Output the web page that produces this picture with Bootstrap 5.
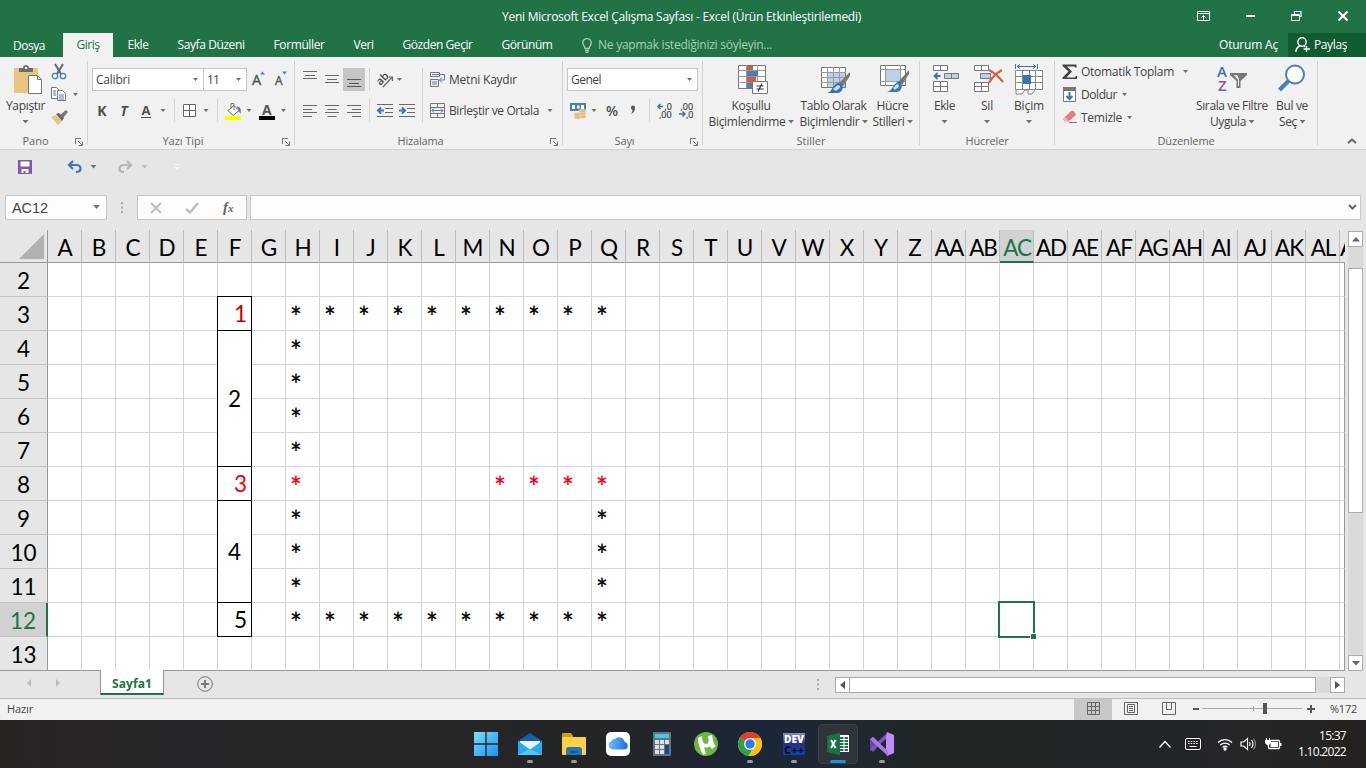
<!DOCTYPE html>
<html lang="tr">
<head>
<meta charset="utf-8">
<meta name="viewport" content="width=device-width, initial-scale=1">
<title>Yeni Microsoft Excel Çalışma Sayfası - Excel</title>
<link rel="stylesheet" href="https://cdn.jsdelivr.net/npm/bootstrap@5.3.0/dist/css/bootstrap.min.css">
<style>
  html,body{height:100%;overflow:hidden}
  body{font-family:"Open Sans","Noto Sans",sans-serif;font-size:12px;line-height:16px;color:#444;background:#e6e6e6;width:1366px;height:768px}
  svg{display:block;flex:none;overflow:visible}
  [data-w]{display:inline-block;white-space:nowrap}
  .xl-title{height:33px;background:#217346;color:#fff;grid-template-columns:1fr auto 1fr;padding-top:1px}
  .xl-title>[data-w]{margin-left:-3px}
  .xl-tabs{height:24px;background:#217346;color:#fff}
  .xl-tabs .nav-link{color:#fff;padding:4px 14.5px 0;height:24px;border-radius:0;line-height:16px}
  .xl-tabs .file-tab{padding:5px 18px 0 13px}
  .xl-tabs .nav-link.active{background:#f1f1f1;color:#217346;padding:4px 13.5px 0}
  .tell-me{color:#a5cfb4;gap:6px;padding-left:15px}
  .share-btn{background:#0e5c2f;width:78px;height:24px;padding-left:7px}
  .sign-in{margin-right:10px}
  .win-btns{width:169px;height:32px;padding:0 18px 3px 0;justify-content:space-between}
  .ribbon{height:93px;background:#f1f1f1;border-bottom:1px solid #d2d2d2}
  .rgroup{position:relative;height:92px;border-right:1px solid transparent;display:flex;flex-direction:column;flex:none}
  .rgroup::after{content:"";position:absolute;right:-1px;top:4px;bottom:4px;width:1px;background:#d2d2d2}
  .rbody{height:77px;display:flex}
  .rlabel{height:14px;line-height:14px;display:flex;justify-content:center;align-items:center;position:relative;color:#666;font-size:11px}
  .rlabel svg{position:absolute;right:4px;top:4px}
  .g-clip{width:88px}.g-font{width:207px}.g-align{width:268px}.g-num{width:140px}.g-style{width:217px}.g-cells{width:135px}.g-edit{width:263px}
  .dd{width:7px;height:4px;margin:0 -1px;background:#707070;clip-path:polygon(8% 0,92% 0,50% 90%);display:inline-block;flex:none}
  .dd.dim{background:#bbb}
  .vsep{width:1px;height:23px;background:#d5d5d5}
  .vsep.long{height:55px;margin-bottom:-32px}
  .trow{display:grid;height:23px;align-items:center;justify-items:center}
  .trow>span[data-w]{justify-self:start}
  .tstack{padding:11px 0 0 4px;display:grid;gap:8px;align-content:start}
  .tr-font1{grid-template-columns:112px 43px 23px 22px;justify-items:start}
  .tr-font2{grid-template-columns:20px 24px 20px 14px 8px 22px 12px 10px 22px 10px 26px 7px}
  .tr-al1{grid-template-columns:22px 22px 22px 9px 22px 7px 15px 9px 22px 90px}
  .tr-al2{grid-template-columns:22px 22px 22px 9px 22px 22px 9px 22px 90px 22px}
  .tr-num2{grid-template-columns:22px 10px 26px 16px 16px 14px 30px}
  .pick{background:#fff;border:1px solid #c6c6c6;height:23px;display:flex;align-items:center;justify-content:space-between;padding:0 5px 0 3px;color:#444}
  .pick.p1{width:112px}.pick.p2{margin-left:-1px;width:44px}.pick.p3{width:131px}
  .on{background:#c5c5c5;width:22px;height:23px;display:grid;place-items:center;padding-top:6px}
  .big{display:flex;flex-direction:column;align-items:center;padding-top:7px;white-space:nowrap}
  .big .ic{height:34px;display:grid;align-content:start;justify-items:center}
  .big div.t{height:16px;line-height:16px;display:flex;align-items:center;gap:3px}
  .fmt{font-weight:700;font-size:14px;line-height:18px;color:#505050}
  .fmt.uline{line-height:14px;border-bottom:1px solid #505050;padding:0 1px;font-size:13px}
  .w-paste{width:51px}.w-clipside{width:36px}
  .small-stack{display:grid;grid-template-rows:23px 23px 23px;padding-top:3px;align-items:center}
  .small-stack>div{display:flex;align-items:center}
  .w-s1{width:96px}.w-s2{width:69px}.w-s3{width:49px}
  .w-c1{width:49px}.w-c2{width:36px}.w-c3{width:48px}
  .w-e1{width:135px;padding-left:7px}.w-e2{width:84px}.w-e3{width:36px}
  .qat{height:45px;padding:0 0 11px 18px}
  .undo-gap{margin-left:34px}.redo-gap{margin-left:22px}.more-gap{margin-left:27px}
  .qat .dd{margin-left:7px}
  .fbar{height:35px;align-items:flex-start}
  .fbar>.fbox{height:25px;border:1px solid #c6c6c6;background:#fdfdfd;display:flex;align-items:center}
  .name-box{width:102px;margin-left:5px;padding:0 6px 0 6px;justify-content:space-between;font:14.500px/20px "Liberation Sans",sans-serif;color:#444}
  .fx-box{width:110px;justify-content:space-between;padding:0 11px 0 12px}
  .formula{width:1111px;margin-left:3px;justify-content:flex-end;padding-right:3px}
  .dots{width:30px;height:25px;display:grid;place-items:center}
  .work{height:441px}
  .sheet{position:relative;width:1345px;height:441px;display:grid;grid-template-columns:48px repeat(38,34px) 5px;grid-template-rows:33px repeat(12,34px);overflow:hidden;flex:none;font-family:Lato,sans-serif;color:#000}
  .hc{border-right:1px solid #bdbdbd;border-bottom:1px solid #999;font-size:22.500px;line-height:35px;padding-left:1px;text-align:center;white-space:nowrap;background:#e6e6e6;height:33px}
  .hc.two span{letter-spacing:-1.100px;margin:0 -6px}
  .hc.cut{border-right:0;overflow:hidden;padding:0}
  .hc.sel{background:#d2d2d2;color:#217346;border-bottom:2px solid #217346}
  .rh{border-right:1px solid #999;border-bottom:1px solid #c4c4c4;font-size:22.500px;line-height:35px;text-align:center;background:#e6e6e6}
  .rh.sel{background:#d2d2d2;color:#217346;border-right:2px solid #217346}
  .cellx{border-right:1px solid #d4d4d4;border-bottom:1px solid #d4d4d4;background:#fff;line-height:33px}
  .cellx.endc{border-right:1px solid #999}
  .cellx.endr,.rh.endr{border-bottom:1px solid #999}
  .star{font-size:28px;font-weight:600;padding-left:4px;line-height:38px;height:34px;overflow:hidden}
  .num{z-index:1;margin:-1px 0 0 -1px;border:1px solid #000;background:#fff;text-align:right;font-size:22.500px;line-height:32px;padding:1px 4px 0 0;display:grid;align-items:center}
  .num.mid{text-align:center;padding:1px 0 0}
  .red1{color:#c00000}.red2{color:#f00010}
  .corner{border-right:1px solid #999;border-bottom:1px solid #999;display:flex;align-items:flex-end;justify-content:flex-end;padding:0 3px 3px 0}
  .pointer-cell{position:absolute;left:998px;top:371px;width:37px;height:37px;border:2px solid #217346;z-index:2}
  .pointer-cell::after{content:"";position:absolute;right:-4px;bottom:-4px;width:7px;height:7px;background:#217346;border:1px solid #fff}
  .vscroll{width:15px;margin:2px 0 0 3px;height:439px;background:#dadada}
  .sbtn{width:15px;height:16px;border:1px solid #ababab;background:#fff;display:grid;place-items:center;flex:none}
  .vscroll .sbtn:first-child{margin-top:-1px}
  .v-thumb{height:245px;margin-top:21px;border:1px solid #ababab;background:#fff}
  .tabs-row{height:28px;border-bottom:1px solid #bdbdbd}
  .tab-arrows{width:100px;padding:0 39px 3px 26px}
  .sheet-tab{width:64px;height:25px;margin-top:-1px;background:#fff;border:1px solid #999;border-top:0;border-bottom:2px solid #217346;color:#217346;font-weight:700;text-align:center;line-height:27px;z-index:3}
  .add-tab{margin:5px 0 0 33px}
  .grip{margin:8px 0 0 auto}
  .hscroll{width:510px;height:16px;margin:6px 21px 0 16px;background:#dadada}
  .h-thumb{width:467px;margin-left:-1px;border:1px solid #ababab;background:#fff;height:16px}
  .status{height:21px;background:#f1f1f1;font-size:11px;padding:0 0 1px 7px}
  .vw{width:38px;height:21px;margin-bottom:-1px;display:grid;place-items:center;padding-bottom:3px}
  .vw.act{background:#c8c8c8}
  .zoom-val{margin:0 9px 0 14px}
  .taskbar{height:48px;background:linear-gradient(90deg,#2a2322 0,#27262a 190px,#262627 400px,#242527 600px,#1b2638 770px,#1e2831 840px,#202722 950px,#21262a 1130px,#252628 1260px,#24211f 1366px);color:#fff}
  .apps{margin-left:466px}
  .app{width:40px;height:40px;border-radius:4px;position:relative;margin-right:4px;display:grid;place-items:center;margin-top:4px}
  .app.cur{background:#2f3438;border:1px solid #3a3f43}
  .app.run::after{content:"";position:absolute;left:17px;bottom:1px;width:6px;height:3px;border-radius:2px;background:#9b9c9c}
  .app.cur::after{content:"";position:absolute;left:11px;bottom:0;width:16px;height:3px;border-radius:2px;background:#1f90e6}
  .tray svg:nth-child(2){margin-left:13px}.tray svg:nth-child(3){margin-left:16px}.tray svg:nth-child(4){margin-left:7px}.tray svg:nth-child(5){margin-left:9px}
  .clock{width:60px;margin:0 20px 0 4px;text-align:right;line-height:16px}
</style>
</head>
<body class="d-flex flex-column">

<header>
  <div class="xl-title d-grid align-items-center">
    <span></span><span data-w="359">Yeni Microsoft Excel Çalışma Sayfası - Excel (Ürün Etkinleştirilemedi)</span>
    <div class="win-btns d-flex ms-auto align-items-center">
      <svg width="13" height="10" fill="none" stroke="#fff"><path d="M.5.5h12v9H.5zM.5 2.500h12M6.500 9V4.500M4.500 6.500l2-2 2 2"/></svg>
      <svg width="9" height="3"><path d="M0 1h9v2H0z" fill="#fff"/></svg>
      <svg width="11" height="10" fill="none" stroke="#fff"><path d="M3.500 3V.5h6.500v5h-2" stroke-width="1.200"/><path d="M.5 3.500h8v6H.5zM.5 4.500h8"/></svg>
      <svg width="10" height="10" stroke="#fff" stroke-width="2.200"><path d="M.5.5l9 9M9.500.5l-9 9"/></svg>
    </div>
  </div>
  <nav class="xl-tabs nav flex-nowrap">
    <a class="nav-link file-tab"><span data-w="32">Dosya</span></a>
    <a class="nav-link active"><span data-w="23">Giriş</span></a>
    <a class="nav-link"><span data-w="21">Ekle</span></a>
    <a class="nav-link"><span data-w="67">Sayfa Düzeni</span></a>
    <a class="nav-link"><span data-w="51">Formüller</span></a>
    <a class="nav-link"><span data-w="20">Veri</span></a>
    <a class="nav-link"><span data-w="70">Gözden Geçir</span></a>
    <a class="nav-link"><span data-w="51">Görünüm</span></a>
    <div class="tell-me d-flex align-items-center">
      <svg width="10" height="15" fill="none" stroke="#a5cfb4" stroke-width="1.300"><path d="M3 10.500C3 8 .8 7.500.8 4.800a4.200 4.200 0 0 1 8.400 0C9.200 7.500 7 8 7 10.500zM3 12.500h4M3.500 14.300h3"/></svg>
      <span data-w="174">Ne yapmak istediğinizi söyleyin...</span>
    </div>
    <div class="ms-auto d-flex align-items-center"><span class="sign-in" data-w="59">Oturum Aç</span></div>
    <div class="share-btn d-flex align-items-center gap-1">
      <svg width="15" height="16" fill="none" stroke="#fff" stroke-width="1.400"><circle cx="7" cy="5" r="4.200"/><path d="M5.500 8.500C3 9.500 1 12 .8 15M9 9l1 1M11.500 9v6M8.500 12h6.500"/></svg>
      <span data-w="33">Paylaş</span>
    </div>
  </nav>
</header>

<section class="ribbon d-flex">
  <div class="rgroup g-clip">
    <div class="rbody">
      <div class="big w-paste">
        <div class="ic ps-1"><svg width="28" height="31"><path d="M0 4h24v25H0z" fill="#e9c583"/><path d="M5 8V4h4c0-4 6-4 6 0h4v4z" fill="#6d6d6d"/><path d="M11 3h2v2h-2z" fill="#f1f1f1"/><path d="M14.500 11.500h9l4 4v14h-13z" fill="#fff" stroke="#777"/><path d="M23.500 11.500v4h4" fill="none" stroke="#777"/></svg></div>
        <div class="t"><span data-w="39">Yapıştır</span></div><div class="t"><i class="dd"></i></div>
      </div>
      <div class="small-stack w-clipside">
        <div><svg width="16" height="17" fill="none"><path d="M4 1l6 10M12 1L6 11" stroke="#666" stroke-width="2"/><circle cx="4" cy="13" r="2.700" stroke="#4a7eba" stroke-width="1.300"/><circle cx="12" cy="13" r="2.700" stroke="#4a7eba" stroke-width="1.300"/></svg></div>
        <div class="gap-2"><svg width="14" height="15" fill="#fff" stroke="#777"><path d="M.5.5h5l2 2v9h-7z"/><path d="M6.500 3.500h5l3 3v7h-8z"/><path d="M2 4h3M2 6h3M2 8h3M8 8h5M8 10h5M8 12h5" stroke="#4a7eba"/></svg><i class="dd"></i></div>
        <div><svg width="17" height="15"><path d="M0 7l5-2 6 6-4 4z" fill="#e9c583"/><path d="M5 4l3-1 5 5-2 3z" fill="#666"/><path d="M9 5l6-5 2 2-5 6z" fill="#777"/></svg></div>
      </div>
    </div>
    <div class="rlabel pe-3"><span data-w="26">Pano</span><svg width="8" height="8" fill="none" stroke="#777"><path d="M.5 6V.5H6M3 3l4 4M7.500 3.500v4h-4"/></svg></div>
  </div>

  <div class="rgroup g-font">
    <div class="rbody tstack">
      <div class="trow tr-font1">
        <div class="pick p1"><span data-w="34">Calibri</span><i class="dd"></i></div>
        <div class="pick p2"><span data-w="12">11</span><i class="dd"></i></div>
        <svg class="ms-1" width="16" height="19"><text x="1" y="15" font-size="14.500" fill="#555" stroke="#555" stroke-width=".4">A</text><path d="M9 4.500l2.500-3 2.500 3z" fill="#4a7eba"/></svg>
        <svg class="ms-1" width="16" height="19"><text x="1" y="15" font-size="12" fill="#555" stroke="#555" stroke-width=".4">A</text><path d="M8 1.500h5l-2.500 3z" fill="#4a7eba"/></svg>
      </div>
      <div class="trow tr-font2">
        <b class="fmt">K</b><b class="fmt fst-italic">T</b><b class="fmt uline">A</b><i class="dd"></i><i class="vsep"></i>
        <svg width="13" height="13" fill="#fff" stroke="#666"><path d="M.5.5h12v12H.5zM6.500 0v13M0 6.500h13"/></svg><i class="dd"></i><i class="vsep"></i>
        <svg width="17" height="18"><path d="M3 8.500l6-5 5 5-6 5z" fill="#fff" stroke="#666"/><path d="M6 7V1.500h3V8" fill="none" stroke="#777"/><path d="M11.500 4.500c4 0 5 3 4 7.500-1-2-2-3-2-4z" fill="#4a7eba"/><path d="M0 14h16v4H0z" fill="#ff0"/></svg><i class="dd"></i>
        <svg width="16" height="18"><text x="3" y="12.500" font-size="14" font-weight="700" fill="#555">A</text><path d="M0 14h16v4H0z"/></svg><i class="dd"></i>
      </div>
    </div>
    <div class="rlabel pe-3"><span data-w="41">Yazı Tipi</span><svg width="8" height="8" fill="none" stroke="#777"><path d="M.5 6V.5H6M3 3l4 4M7.500 3.500v4h-4"/></svg></div>
  </div>

  <div class="rgroup g-align">
    <div class="rbody tstack">
      <div class="trow tr-al1">
        <svg width="14" height="20" stroke="#6a6a6a"><path d="M0 1.500h14M2 5.500h10M0 8.500h14"/></svg>
        <svg width="14" height="20" stroke="#6a6a6a"><path d="M0 5.500h14M2 9.500h10M0 12.500h14"/></svg>
        <div class="on"><svg width="14" height="10" stroke="#555"><path d="M0 1.500h14M2 5.500h10M0 8.500h14"/></svg></div>
        <i class="vsep"></i>
        <svg width="17" height="16"><text x="2" y="13" font-size="11" font-weight="600" fill="#444" transform="rotate(-45 4 12)">ab</text><path d="M6 15L15 5.500M11.500 5h4v4" fill="none" stroke="#666" stroke-width="1.200"/></svg>
        <i class="dd"></i><span></span><i class="vsep long align-self-start"></i>
        <svg width="16" height="16" fill="none" stroke="#777"><path d="M.5.5h9v4h-9zM.5 7.500h8v7h-8zM2 10h5M2 12h5"/><path d="M2 2.500h12.500V8H9.500M12 5.500L9.500 8l2.500 2.500" stroke="#4a7eba"/></svg>
        <span data-w="68">Metni Kaydır</span>
      </div>
      <div class="trow tr-al2">
        <svg width="14" height="12" stroke="#6a6a6a"><path d="M0 .5h14M0 4.500h9M0 7.500h14M0 11.500h9"/></svg>
        <svg width="14" height="12" stroke="#6a6a6a"><path d="M0 .5h14M2.500 4.500h9M0 7.500h14M2.500 11.500h9"/></svg>
        <svg width="14" height="12" stroke="#6a6a6a"><path d="M0 .5h14M5 4.500h9M0 7.500h14M5 11.500h9"/></svg>
        <i class="vsep"></i>
        <svg width="16" height="13" stroke="#6a6a6a"><path d="M0 .5h16M8 4.500h8M8 8.500h8M0 12.500h16"/><path d="M1 6.500h6M4 3.500l-3 3 3 3" fill="none" stroke="#3b74b4" stroke-width="2"/></svg>
        <svg width="16" height="13" stroke="#6a6a6a"><path d="M0 .5h16M8 4.500h8M8 8.500h8M0 12.500h16"/><path d="M0 6.500h6M3 3.500l3 3-3 3" fill="none" stroke="#3b74b4" stroke-width="2"/></svg>
        <span></span>
        <svg width="16" height="15" fill="none" stroke="#777"><path d="M.5.5h14v14H.5zM.5 4.500h14M.5 10.500h14M7.500 0v4M7.500 11v4"/><path d="M2 7.500h11M4 5.500l-2 2 2 2M11 5.500l2 2-2 2" stroke="#4a7eba"/></svg>
        <span data-w="90">Birleştir ve Ortala</span><i class="dd"></i>
      </div>
    </div>
    <div class="rlabel pe-3"><span data-w="46">Hizalama</span><svg width="8" height="8" fill="none" stroke="#777"><path d="M.5 6V.5H6M3 3l4 4M7.500 3.500v4h-4"/></svg></div>
  </div>

  <div class="rgroup g-num">
    <div class="rbody tstack">
      <div class="d-flex"><div class="pick p3"><span data-w="30">Genel</span><i class="dd"></i></div></div>
      <div class="trow tr-num2">
        <svg width="17" height="16"><path d="M0 0h16v8H0z" fill="#4a7eba"/><path d="M2 2h3v4H2zM11 2h3v4h-3zM7 2.500h2.500v3H7z" fill="#fff"/><g fill="#e3bb76" stroke="#f1f1f1" stroke-width=".4"><ellipse cx="12.500" cy="13.500" rx="3.500" ry="1.900"/><ellipse cx="12.500" cy="10.500" rx="3.500" ry="1.900"/><ellipse cx="12.500" cy="7.800" rx="3.500" ry="1.900"/><ellipse cx="7.500" cy="14.300" rx="3.500" ry="1.900"/><ellipse cx="7.500" cy="11.500" rx="3.500" ry="1.900"/></g></svg>
        <i class="dd"></i><b class="fmt fw-semibold">%</b>
        <svg width="6" height="9"><path d="M1 1.500a2 2 0 0 1 4 0C5 5 3.500 7 1 8c1-1.500 1.500-2.500 1.500-4C1.500 4 1 3 1 1.500z" fill="#555"/></svg>
        <i class="vsep"></i>
        <svg width="15" height="17" font-size="9" fill="#444" stroke="#444" stroke-width=".2"><text x="7.500" y="7.500">,0</text><text x="2" y="15.500">,00</text><path d="M1 4.500h5M3.500 2L1 4.500 3.500 7" fill="none" stroke="#3b74b4" stroke-width="1.500"/></svg>
        <svg width="15" height="17" font-size="9" fill="#444" stroke="#444" stroke-width=".2"><text x="1.500" y="7.500">,00</text><text x="7" y="15.500">,0</text><path d="M0 12h6M3.500 9.500L6 12l-2.500 2.500" fill="none" stroke="#3b74b4" stroke-width="1.500"/></svg>
      </div>
    </div>
    <div class="rlabel pe-3"><span data-w="20">Sayı</span><svg width="8" height="8" fill="none" stroke="#777"><path d="M.5 6V.5H6M3 3l4 4M7.500 3.500v4h-4"/></svg></div>
  </div>

  <div class="rgroup g-style">
    <div class="rbody">
      <div class="big w-s1">
        <div class="ic ps-1"><svg width="31" height="31"><path d="M.5 1.500h27v23H.5z" fill="#fff" stroke="#777"/><path d="M8.500 1v23M19.500 1v23M0 6.500h27M0 12.500h27M0 18.500h27" stroke="#999"/><path d="M9 2h6v4H9zM9 13h9v5H9z" fill="#d35a3c"/><path d="M9 7h11v5H9zM9 19h5v5H9z" fill="#4a7eba"/><path d="M14.500 17.500h15v12h-15z" fill="#fff" stroke="#777"/><path d="M18.500 22h7M18.500 25h7M24 19.500l-4 8" stroke="#333" stroke-width="1.200"/></svg></div>
        <div class="t"><span data-w="39">Koşullu</span></div><div class="t"><span data-w="77">Biçimlendirme</span><i class="dd"></i></div>
      </div>
      <div class="big w-s2">
        <div class="ic ps-1"><svg width="30" height="31"><path d="M.5 3.500h24v20H.5z" fill="#fff" stroke="#777"/><path d="M7 9h17v14H7z" fill="#bdd0e6"/><path d="M6.500 3v20M12.500 3v20M18.500 3v20M0 8.500h25M0 13.500h25M0 18.500h25" stroke="#999"/><path d="M29 8v4l-7 10-4-3z" fill="#777"/><path d="M20 19c3 3 2 9-3 10H6c4-1 4-3 6-6 2-4 6-5 8-4z" fill="#3b74b4"/><path d="M12 25c2-1 3-3 5-4l2 1c0 3-2 3-4 5z" fill="#cfe0f2"/></svg></div>
        <div class="t"><span data-w="66">Tablo Olarak</span></div><div class="t"><span data-w="60">Biçimlendir</span><i class="dd"></i></div>
      </div>
      <div class="big w-s3">
        <div class="ic ps-1"><svg width="30" height="31"><path d="M.5 1.500h25v20H.5z" fill="#fff" stroke="#777"/><path d="M5.500 1v21M20.500 1v21M0 5.500h26M0 17.500h26" stroke="#999"/><path d="M6 6h14v11H6z" fill="#bdd0e6"/><path d="M29 6v4l-7 11-4-3z" fill="#777"/><path d="M20 18c3 3 2 9-3 10H7c4-1 4-3 6-5 2-4 5-6 7-5z" fill="#3b74b4"/><path d="M13 24c2-1 2-3 4-4l2 1c0 3-2 3-4 5z" fill="#cfe0f2"/></svg></div>
        <div class="t"><span data-w="32">Hücre</span></div><div class="t"><span data-w="32">Stilleri</span><i class="dd"></i></div>
      </div>
    </div>
    <div class="rlabel"><span data-w="29">Stiller</span></div>
  </div>

  <div class="rgroup g-cells">
    <div class="rbody">
      <div class="big w-c1">
        <div class="ic ps-1"><svg width="27" height="30" fill="#fff" stroke="#777"><path d="M.5 1.500h14v5H.5zM7.500 1.500v5M.5 17.500h14v10H.5zM7.500 17v10M.5 22.500h14"/><path d="M11.500 9.500h14v5h-14z" fill="#bdd0e6"/><path d="M18.500 9.500v5"/><path d="M1.500 12h6M4.500 9l-3 3 3 3" fill="none" stroke="#3b74b4" stroke-width="1.800"/></svg></div>
        <div class="t"><span data-w="21">Ekle</span></div><div class="t"><i class="dd"></i></div>
      </div>
      <div class="big w-c2">
        <div class="ic ps-1"><svg width="30" height="30" fill="#fff" stroke="#777"><path d="M.5 1.500h14v5H.5zM7.500 1.500v5M.5 18.500h14v9H.5zM7.500 18v10M.5 22.500h14"/><path d="M6.500 9.500h10v5h-10z" fill="#bdd0e6"/><path d="M15 6c4 2 10 7 14 12M28 6c-5 3-10 7-13 13" fill="none" stroke="#d8603f" stroke-width="2.200"/></svg></div>
        <div class="t"><span data-w="12">Sil</span></div><div class="t"><i class="dd"></i></div>
      </div>
      <div class="big w-c3">
        <div class="ic"><svg width="29" height="31" fill="none" stroke="#888"><path d="M.5 6.500h27v19H.5z" fill="#fff"/><path d="M7.500 6v20M20.500 6v20M0 12.500h28M0 18.500h28M14.500 6v20"/><path d="M8 11h8v9H8z" fill="#3b74b4" stroke="none"/><path d="M1 26v4h6l3-4h3v4h4l3-4"/><path d="M.5 0v5M22.500 0v5M2 2.500h19M5 .5l-3 2 3 2M18 .5l3 2-3 2" stroke="#3b74b4"/></svg></div>
        <div class="t"><span data-w="30">Biçim</span></div><div class="t"><i class="dd"></i></div>
      </div>
    </div>
    <div class="rlabel"><span data-w="43">Hücreler</span></div>
  </div>

  <div class="rgroup g-edit">
    <div class="rbody">
      <div class="small-stack w-e1">
        <div><svg width="19" height="16"><path d="M.5.500h14v3h-1.500l-.5-1H5l5 5-5.500 6H13l.8-1.500h1.200V15H.5v-1.500l6-6-6-5.500z" fill="#444"/></svg><span data-w="93">Otomatik Toplam</span><i class="dd ms-2"></i></div>
        <div><svg width="19" height="16"><path d="M1.500 1.500h12v13h-12z" fill="#fff" stroke="#777"/><path d="M1 0h13v4H1z" fill="#777"/><path d="M7.500 5v7M4.500 9l3 3 3-3" fill="none" stroke="#3b74b4" stroke-width="2"/></svg><span data-w="36">Doldur</span><i class="dd ms-1"></i></div>
        <div><svg width="19" height="15"><path d="M1 9L9 1h3l2 4-8 7H3z" fill="#e8788c"/><path d="M1 9l2-2 4 4-1 1H3z" fill="#f3b7c0"/><path d="M7 12.500h8" stroke="#777"/></svg><span data-w="41">Temizle</span><i class="dd ms-1"></i></div>
      </div>
      <div class="big w-e2">
        <div class="ic"><svg width="30" height="30"><text x="0" y="13" font-size="15" font-weight="600" fill="#3b74b4">A</text><text x="1" y="27" font-size="15" font-weight="600" fill="#8b56ad">Z</text><path d="M13 9h17v2l-6.500 6v7h-4v-7L13 11z" fill="#777"/><path d="M17 11l4 5v6h1V15l-2-4z" fill="#eee"/></svg></div>
        <div class="t"><span data-w="72">Sırala ve Filtre</span></div><div class="t"><span data-w="36">Uygula</span><i class="dd"></i></div>
      </div>
      <div class="big w-e3">
        <div class="ic"><svg width="28" height="30"><circle cx="17" cy="10.500" r="9" fill="#fff" stroke="#4a7eba" stroke-width="2"/><path d="M10.500 17L1.500 26" stroke="#4a7eba" stroke-width="4"/></svg></div>
        <div class="t"><span data-w="32">Bul ve</span></div><div class="t"><span data-w="18">Seç</span><i class="dd"></i></div>
      </div>
    </div>
    <div class="rlabel"><span data-w="57">Düzenleme</span></div>
  </div>
  <svg class="mt-auto mb-1 ms-auto me-2" width="11" height="8" fill="none" stroke="#666" stroke-width="2"><path d="M1 6l4-3.500L9 6"/></svg>
</section>

<div class="qat d-flex align-items-center">
  <svg width="15" height="15"><path d="M0 0h14v14H0z" fill="#8458a6"/><path d="M2.500 1.500h9v5h-9zM3.500 9h7v4h-3v-2h-2v2h-2z" fill="#fff"/></svg>
  <svg class="undo-gap" width="16" height="14" fill="none" stroke="#3f76b5" stroke-width="2.200"><path d="M2 5h7c6 0 6 7 0 7M6 1L2 5l4 4"/></svg><i class="dd"></i>
  <svg class="redo-gap" width="16" height="14" fill="none" stroke="#b5b5b5" stroke-width="2.200"><path d="M13 5H6c-6 0-6 7 0 7M9 1l4 4-4 4"/></svg><i class="dd dim"></i>
  <svg class="more-gap" width="7" height="7"><path d="M0 .5h6" stroke="#f4f4f4"/><path d="M0 3h6L3 6z" fill="#f4f4f4"/></svg>
</div>
<div class="fbar d-flex">
  <div class="fbox name-box"><span data-w="36">AC12</span><svg width="7" height="5"><path d="M0 0h7L3.500 4z" fill="#777"/></svg></div>
  <div class="dots"><svg width="2" height="11" fill="#aaa"><path d="M0 0h2v2H0zM0 4.500h2v2H0zM0 9h2v2H0z"/></svg></div>
  <div class="fbox fx-box">
    <svg width="12" height="12" stroke="#bdbdbd" stroke-width="2"><path d="M1 1l10 10M11 1L1 11"/></svg>
    <svg width="14" height="12" fill="none" stroke="#bdbdbd" stroke-width="2.400"><path d="M1 7l4 3.500L13 1"/></svg>
    <svg width="14" height="16"><text x="2" y="12" font-family="Liberation Serif" font-style="italic" font-weight="700" font-size="15" fill="#666">f</text><text x="7" y="12" font-family="Liberation Serif" font-style="italic" font-weight="700" font-size="11" fill="#666">x</text></svg>
  </div>
  <div class="fbox formula"><svg width="9" height="7" fill="none" stroke="#666" stroke-width="2"><path d="M1 1l3.500 3.500L8 1"/></svg></div>
</div>

<main class="work d-flex">
  <div class="sheet" id="sheet"></div>
  <div class="vscroll d-flex flex-column">
    <div class="sbtn"><svg width="8" height="5"><path d="M0 4.500h8L4 0z" fill="#666"/></svg></div>
    <div class="v-thumb"></div>
    <div class="sbtn mt-auto"><svg width="8" height="5"><path d="M0 0h8L4 4.500z" fill="#666"/></svg></div>
  </div>
</main>

<div class="tabs-row d-flex">
  <div class="tab-arrows d-flex align-items-center justify-content-between">
    <svg width="5" height="8"><path d="M5 0v8L1 4z" fill="#bbb"/></svg><svg width="5" height="8"><path d="M0 0v8l4-4z" fill="#bbb"/></svg>
  </div>
  <div class="sheet-tab"><span data-w="40">Sayfa1</span></div>
  <svg class="add-tab" width="17" height="17" fill="none" stroke="#777"><circle cx="8" cy="8" r="7.300"/><path d="M8 4v8M4 8h8" stroke-width="2"/></svg>
  <svg class="grip" width="2" height="11" fill="#aaa"><path d="M0 0h2v2H0zM0 4.500h2v2H0zM0 9h2v2H0z"/></svg>
  <div class="hscroll d-flex">
    <div class="sbtn"><svg width="5" height="8"><path d="M5 0v8L0 4z" fill="#555"/></svg></div>
    <div class="h-thumb"></div>
    <div class="sbtn ms-auto"><svg width="5" height="8"><path d="M0 0v8l5-4z" fill="#555"/></svg></div>
  </div>
</div>

<footer class="status d-flex align-items-center">
  <span data-w="26">Hazır</span>
  <div class="ms-auto d-flex align-items-center">
    <div class="vw act"><svg width="13" height="13" fill="none" stroke="#666"><path d="M.5.500h12v12H.5zM4.500 0v13M8.500 0v13M0 4.500h13M0 8.500h13"/></svg></div>
    <div class="vw"><svg width="14" height="13" fill="none" stroke="#666"><path d="M.5.500h13v12H.5zM3.500 2.500h7v8h-7zM5 4.500h4M5 6.500h4M5 8.500h4"/></svg></div>
    <div class="vw"><svg width="14" height="13" fill="none" stroke="#666"><path d="M.5.500h13v12H.5zM4.500 0v7.500H9.500V0"/></svg></div>
    <svg class="ms-1" width="124" height="16"><path d="M1 7h6v2H1zM115 7h8v2h-8zM118 4h2v8h-2z" fill="#555"/><path d="M10.500 7.500h100M61.500 5v5" stroke="#aaa"/><path d="M71 2h4v11h-4z" fill="#555"/></svg>
    <span class="zoom-val" data-w="27">%172</span>
  </div>
</footer>

<div class="taskbar d-flex">
  <div class="apps d-flex">
    <div class="app"><svg width="24" height="24"><defs><linearGradient id="w" x2="1" y2="1"><stop stop-color="#7fdcfb"/><stop offset="1" stop-color="#1593ee"/></linearGradient></defs><path d="M0 0h11.300v11.300H0zM12.700 0H24v11.300H12.700zM0 12.700h11.300V24H0zM12.700 12.700H24V24H12.700z" fill="url(#w)"/></svg></div>
    <div class="app run"><svg width="24" height="24"><path d="M0 9L12 1l12 8v6H0z" fill="#1560ac"/><path d="M2 9h20v8H2z" fill="#e9f6fd"/><path d="M0 9l12 8.500L24 9v14H0z" fill="#2ba9ea"/><path d="M0 23l12-6 12 6z" fill="#52c6f4"/></svg></div>
    <div class="app run"><svg width="24" height="24"><path d="M0 2q0-1 1-1h8l2 3v4H0z" fill="#d89a10"/><path d="M0 5h23q1 0 1 1v16q0 1-1 1H1q-1 0-1-1z" fill="#ffd04a"/><path d="M4 23v-5q0-3 3-3h10q3 0 3 3v5z" fill="#2078b8"/><path d="M8 19h8v2H8z" fill="#0e5a96"/></svg></div>
    <div class="app"><svg width="24" height="24"><defs><linearGradient id="c" x2="1"><stop stop-color="#69c2fa"/><stop offset="1" stop-color="#2769de"/></linearGradient></defs><rect width="24" height="24" rx="5" fill="#fff"/><path d="M6 17.500a4.300 4.300 0 0 1-1-8 3.500 3.500 0 0 1 4-2.500A5.700 5.700 0 0 1 18.700 10a3.900 3.900 0 0 1 .5 7.500z" fill="url(#c)"/></svg></div>
    <div class="app"><svg width="18" height="24"><rect width="18" height="24" rx="1" fill="#66727d"/><path d="M2 2h14v4H2z" fill="#3ecbe8"/><path d="M2 8h4v4H2zM7 8h4v4H7zM12 8h4v4h-4zM2 13h4v4H2zM7 13h4v4H7zM2 18h4v4H2zM7 18h4v4H7z" fill="#dbe0e4"/><path d="M12 13h4v9h-4z" fill="#174a85"/></svg></div>
    <div class="app"><svg width="24" height="24"><circle cx="12" cy="12" r="12" fill="#6fb544"/><path d="M4 6l4-2c0 4 1 8 4 8s3-4 2-8l4-1c1 4 1 9 4 11l-4 3c-1-1-2-2-2-3-2 2-4 2-6 1l2 7-3 1C6 17 4 12 4 6z" fill="#fff"/></svg></div>
    <div class="app run"><svg width="24" height="24"><circle cx="12" cy="12" r="12" fill="#fbc116"/><path d="M12 12L1.600 6A12 12 0 0 1 22.400 6z" fill="#e33b2e"/><path d="M12 12L1.600 6a12 12 0 0 0 8.900 17.900L16 14z" fill="#2ba24c"/><path d="M12 6h10.400a12 12 0 0 1-11.900 17.900L17 14z" fill="#fbc116"/><circle cx="12" cy="12" r="6" fill="#fff"/><circle cx="12" cy="12" r="4.700" fill="#2a7de9"/></svg></div>
    <div class="app run"><svg width="24" height="24"><defs><linearGradient id="d" x2="0" y2="1"><stop stop-color="#8590c8"/><stop offset=".45" stop-color="#26327d"/><stop offset="1" stop-color="#1243a5"/></linearGradient></defs><path d="M1 1h22v22H1z" fill="url(#d)"/><text x="2" y="11" font-size="10.500" font-weight="800" textLength="20" lengthAdjust="spacingAndGlyphs" fill="#fff">DEV</text><text x="2" y="22" font-size="11" font-weight="800" textLength="20" lengthAdjust="spacingAndGlyphs" fill="#07102c">C++</text></svg></div>
    <div class="app cur"><svg width="24" height="24"><path d="M12 3h11v17H12z" fill="#fff"/><path d="M14 5h8v14h-8z" fill="#207346"/><path d="M14 7.500h8M14 10.500h8M14 13.500h8M14 16.500h8M18 5v14" stroke="#fff"/><path d="M1 4l13-3v22L1 20z" fill="#1e7145"/><path d="M5 8l4.500 8M9.500 8L5 16" stroke="#fff" stroke-width="2"/></svg></div>
    <div class="app run"><svg width="24" height="24"><path d="M0 7l3-2 3 2v10l-3 3-3-2z" fill="#6d45a8"/><path d="M3 19L18 5V0L0 17z" fill="#7c54bd"/><path d="M17 0l7 3v18l-7 3-1-4V5z" fill="#c08cf5"/><path d="M0 7l3-2 15 14v5L8 15z" fill="#a678e2"/></svg></div>
  </div>
  <div class="tray ms-auto d-flex align-items-center">
    <svg width="14" height="9" fill="none" stroke="#fff" stroke-width="1.300"><path d="M1.500 7.500l5.500-6 5.500 6"/></svg>
    <svg width="16" height="12" fill="none" stroke="#fff"><rect x=".5" y=".5" width="15" height="11" rx="1.500"/><path d="M3 3.500h10M3 5.500h10" stroke-dasharray="1.500 1.200" stroke-width="1.200"/><path d="M4.500 8.500h7"/></svg>
    <svg width="16" height="14" fill="none" stroke="#fff" stroke-width="1.300"><path d="M1 5.500a10 10 0 0 1 14 0M3.300 8a6.700 6.700 0 0 1 9.400 0M5.600 10.400a3.500 3.500 0 0 1 4.800 0"/><circle cx="8" cy="12" r="1" fill="#fff"/></svg>
    <svg width="16" height="14" fill="none" stroke="#fff" stroke-width="1.200"><path d="M1 5h2.500l4-3.500v11l-4-3.500H1z"/><path d="M9.500 5q1.500 2 0 4M11.500 3q3 4 0 8"/><path d="M13.500 1.500q4 5.500 0 11" stroke="#888"/></svg>
    <svg width="17" height="14"><path d="M5.500 3.500h8q1 0 1 1v6q0 1-1 1h-9q-1 0-1-1V8" fill="none" stroke="#fff" stroke-width="1.300"/><path d="M6 5h7v5H5.500V8zM15 6h1.500v3H15zM0 3h6v3L4 8H2L0 6zM1 1h1v2H1zM4 1h1v2H4z" fill="#fff"/></svg>
    <div class="clock"><span data-w="27">15:37</span><br><span data-w="48">1.10.2022</span></div>
  </div>
</div>

<script>
  // Build the worksheet: column headers, rows 2-13, values and merged blocks.
  const sheet = document.getElementById('sheet');
  const letter = i => i < 26 ? String.fromCharCode(65 + i) : 'A' + String.fromCharCode(39 + i);
  const add = (cls, row, col, text, span) => {
    const el = document.createElement('div');
    el.className = cls;
    el.style.gridArea = `${row} / ${col} / span ${span || 1} / span 1`;
    if (text) { const s = document.createElement('span'); s.textContent = text; el.append(s); }
    sheet.append(el);
    return el;
  };
  add('corner', 1, 1).innerHTML = '<svg width="25" height="25"><path d="M25 0v25H0z" fill="#b1b1b1"/></svg>';
  for (let c = 0; c < 39; c++)
    add('hc' + (c > 25 && c < 38 ? ' two' : '') + (c === 28 ? ' sel' : '') + (c === 38 ? ' cut text-start' : ''), 1, c + 2, c === 38 ? 'A' : letter(c));
  const stars = { 3: 'HIJKLMNOPQ', 4: 'H', 5: 'H', 6: 'H', 7: 'H', 8: 'HNOPQ', 9: 'HQ', 10: 'HQ', 11: 'HQ', 12: 'HIJKLMNOPQ' };
  for (let r = 2; r <= 13; r++) {
    const end = r === 13 ? ' endr' : '';
    add('rh' + (r === 12 ? ' sel' : '') + end, r, 1, String(r));
    for (let c = 0; c < 39; c++) {
      const star = c < 26 && (stars[r] || '').includes(letter(c));
      add('cellx' + end + (c === 38 ? ' endc' : '') + (star ? ' star' : '') + (star && r === 8 ? ' red2' : ''), r, c + 2, star ? '*' : '');
    }
  }
  add('num red1', 3, 7, '1');
  add('num mid', 4, 7, '2', 4);
  add('num red2', 8, 7, '3');
  add('num mid', 9, 7, '4', 3);
  add('num', 12, 7, '5');
  const ptr = document.createElement('div');
  ptr.className = 'pointer-cell';
  sheet.append(ptr);

  // Track each label so that it fills the width of its slot.
  document.querySelectorAll('[data-w]').forEach(el => {
    const gap = (el.dataset.w - el.getBoundingClientRect().width) / el.textContent.length;
    el.style.letterSpacing = gap.toFixed(3) + 'px';
  });
</script>
<script src="https://cdn.jsdelivr.net/npm/bootstrap@5.3.0/dist/js/bootstrap.bundle.min.js"></script>
</body>
</html>
